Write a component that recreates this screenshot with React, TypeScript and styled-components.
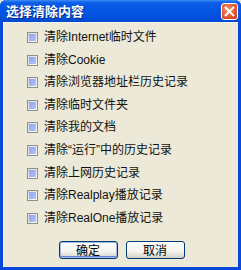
import React from "react";
import styled, { createGlobalStyle } from "styled-components";

const Global = createGlobalStyle`
  html, body { margin: 0; padding: 0; background: #ECE9D8; }
  body { font-family: "Liberation Sans", "Noto Sans CJK SC", sans-serif; }
`;

const Window = styled.div`
  width: 241px;
  height: 270px;
  box-sizing: border-box;
  display: flex;
  flex-direction: column;
  background: #0848d8;
  border-radius: 6px 6px 0 0;
  overflow: hidden;
`;

const TitleBar = styled.div`
  height: 22px;
  flex: none;
  display: flex;
  align-items: center;
  justify-content: space-between;
  padding: 0 3px 0 6px;
  background: linear-gradient(
    to bottom,
    #3d8cf8 0%,
    #0c5ee6 12%,
    #0456e4 40%,
    #0553df 70%,
    #0149d0 100%
  );
`;

const Title = styled.span`
  color: #fff;
  font-family: "Noto Sans CJK SC", sans-serif;
  font-size: 13px;
  font-weight: bold;
  text-shadow: 1px 1px 0 #0a2a80;
  line-height: 22px;
`;

const CloseButton = styled.div`
  width: 17px;
  height: 17px;
  margin-top: 1px;
  border: 1px solid #fff;
  border-radius: 3px;
  background: radial-gradient(circle at 40% 35%, #f29a7c 0%, #e2572f 55%, #c23b14 100%);
  display: flex;
  align-items: center;
  justify-content: center;
  box-sizing: border-box;
`;

const Body = styled.div`
  flex: 1;
  margin: 0 3px 3px 3px;
  background: #ECE9D8;
  display: flex;
  flex-direction: column;
  padding: 9px 0 0 24px;
  box-shadow: inset 1px 1px 0 #f6f4ea;
`;

const List = styled.div`
  display: flex;
  flex-direction: column;
  gap: 9.6px;
`;

const Row = styled.label`
  display: flex;
  align-items: center;
  gap: 6px;
  height: 13px;
  font-size: 12px;
  color: #111;
  line-height: 13px;
  white-space: nowrap;
`;

const Box = styled.span`
  width: 11px;
  height: 11px;
  flex: none;
  box-sizing: border-box;
  border: 1px solid #8e8f8f;
  background: linear-gradient(135deg, #dcdcd6, #fbfbf8);
  display: flex;
  align-items: center;
  justify-content: center;
  &::after {
    content: "";
    width: 7px;
    height: 7px;
    background: linear-gradient(135deg, #8ea4f4, #b4c2f8);
  }
`;

const Buttons = styled.div`
  display: flex;
  gap: 8px;
  justify-content: center;
  margin-top: auto;
  margin-bottom: 8px;
  margin-left: -24px;
  padding-left: 2px;
`;

const Button = styled.div<{ $default?: boolean }>`
  width: 59px;
  height: 18px;
  box-sizing: border-box;
  border: 1px solid #003c74;
  border-radius: 3px;
  background: linear-gradient(to bottom, #ffffff 0%, #f4f3ee 60%, #d6d0c5 100%);
  box-shadow: ${(p) =>
    p.$default ? "inset 0 0 0 1px #a6b8e8, inset 0 -1px 0 1px #6482d8" : "inset 0 -1px 0 #d6d0c5"};
  font-family: "Noto Sans CJK SC", sans-serif;
  font-size: 12px;
  line-height: 16px;
  text-align: center;
  color: #000;
`;

const items = [
  "清除Internet临时文件",
  "清除Cookie",
  "清除浏览器地址栏历史记录",
  "清除临时文件夹",
  "清除我的文档",
  "清除\u201C运行\u201D中的历史记录",
  "清除上网历史记录",
  "清除Realplay播放记录",
  "清除RealOne播放记录",
];

export default function App() {
  return (
    <>
      <Global />
      <Window>
        <TitleBar>
          <Title>选择清除内容</Title>
          <CloseButton>
            <svg width="11" height="11" viewBox="0 0 10 10">
              <path d="M1.5 1.5 L8.5 8.5 M8.5 1.5 L1.5 8.5" stroke="#fff" strokeWidth="1.8" strokeLinecap="square" />
            </svg>
          </CloseButton>
        </TitleBar>
        <Body>
          <List>
            {items.map((t) => (
              <Row key={t}>
                <Box />
                {t}
              </Row>
            ))}
          </List>
          <Buttons>
            <Button $default>确定</Button>
            <Button>取消</Button>
          </Buttons>
        </Body>
      </Window>
    </>
  );
}
